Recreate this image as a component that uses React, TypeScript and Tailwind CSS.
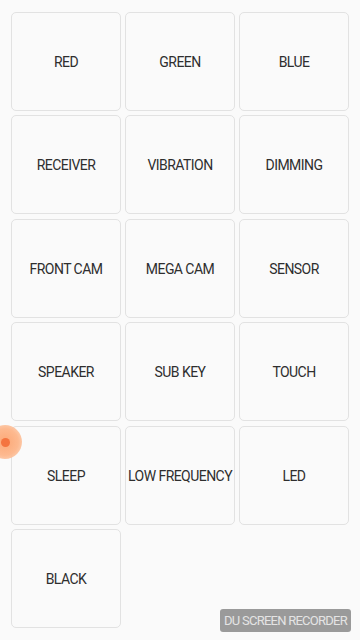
const items = [
  "RED", "GREEN", "BLUE",
  "RECEIVER", "VIBRATION", "DIMMING",
  "FRONT CAM", "MEGA CAM", "SENSOR",
  "SPEAKER", "SUB KEY", "TOUCH",
  "SLEEP", "LOW FREQUENCY", "LED",
  "BLACK",
];

export default function App() {
  return (
    <div className="relative w-[360px] h-[640px] overflow-hidden bg-[#fafafa] font-['Roboto',sans-serif]">
      <div className="grid grid-cols-3 gap-x-[4px] gap-y-[4.4px] px-[11px] pt-[12px]">
        {items.map((t) => (
          <div
            key={t}
            className="h-[99px] flex items-center justify-center pt-[2px] rounded-[5px] border border-[#e2e2e2] bg-[#fafafa] text-[14px] tracking-[-0.55px] text-[#2e2e2e] whitespace-nowrap"
          >
            {t}
          </div>
        ))}
      </div>

      {/* touch indicator */}
      <div className="absolute left-[-12px] top-[425px] w-[34px] h-[34px] rounded-full bg-[radial-gradient(circle,#fca877_0%,#fdb98f_55%,rgba(253,200,165,0.5)_100%)] flex items-center justify-center">
        <div className="w-[9px] h-[9px] rounded-full bg-[#f4743f]" />
      </div>

      <div className="absolute left-[220px] top-[609px] h-[23px] w-[131px] flex items-center justify-center rounded-[3px] bg-[#9a9a9a] text-[13px] tracking-[-0.75px] text-[#e4e4e4] whitespace-nowrap">
        DU SCREEN RECORDER
      </div>
    </div>
  );
}
